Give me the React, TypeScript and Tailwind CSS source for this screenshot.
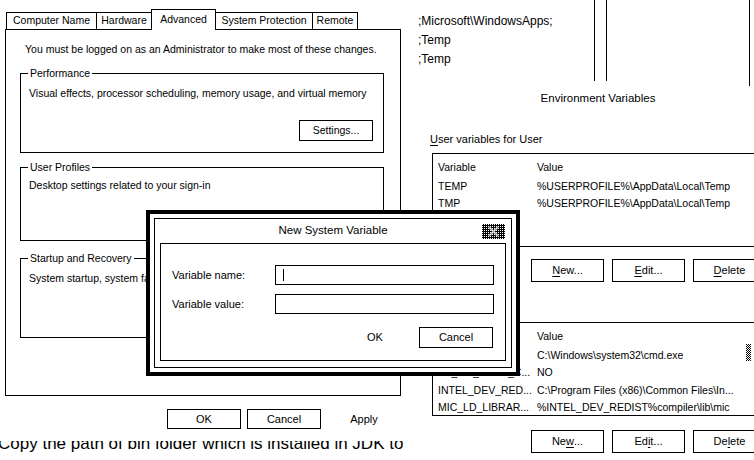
import React from "react";

const tabs = [
  { label: "Computer Name", w: "w-[91px]" },
  { label: "Hardware", w: "w-[56px]" },
  { label: "Advanced", w: "w-[65px]", active: true },
  { label: "System Protection", w: "w-[98px]" },
  { label: "Remote", w: "w-[46px]" },
];

const userVars = [
  ["TEMP", "%USERPROFILE%\\AppData\\Local\\Temp"],
  ["TMP", "%USERPROFILE%\\AppData\\Local\\Temp"],
];

const systemVars = [
  ["ComSpec", "C:\\Windows\\system32\\cmd.exe"],
  ["FP_NO_HOST_C...", "NO"],
  ["INTEL_DEV_RED...", "C:\\Program Files (x86)\\Common Files\\In..."],
  ["MIC_LD_LIBRAR...", "%INTEL_DEV_REDIST%compiler\\lib\\mic"],
];

function Btn({ children, className = "" }: { children: React.ReactNode; className?: string }) {
  return (
    <div className={`flex items-center justify-center border border-black ${className}`}>
      {children}
    </div>
  );
}

function Key({ children }: { children: React.ReactNode }) {
  return <span className="underline underline-offset-2">{children}</span>;
}

function Group({
  title,
  className = "",
  children,
}: {
  title: string;
  className?: string;
  children: React.ReactNode;
}) {
  return (
    <fieldset className={`w-[364px] border border-black pl-[8px] ${className}`}>
      <legend className="-ml-[1px] h-[13px] px-[2px] leading-[13px]">{title}</legend>
      {children}
    </fieldset>
  );
}

function SystemProperties() {
  return (
    <div className="absolute left-0 top-0 w-[401px] pt-[9px] text-[10.5px]">
      {/* tabs */}
      <div className="ml-[6px] flex items-end">
        {tabs.map((t, i) => (
          <div
            key={t.label}
            className={`${t.w} ${i > 0 ? "-ml-px" : ""} flex items-center justify-center border border-b-0 border-black bg-white ${
              t.active ? "relative z-10 -mb-px h-[21px]" : "h-[17px]"
            }`}
          >
            {t.label}
          </div>
        ))}
      </div>

      {/* tab page */}
      <div className="ml-[5px] h-[367px] w-[396px] border border-black pl-[14px] pt-[13px]">
        <p className="ml-[5px] h-[13px] leading-[13px]">
          You must be logged on as an Administrator to make most of these changes.
        </p>

        <Group title="Performance" className="mt-[11px] h-[86px]">
          <p className="mt-[7px] leading-[13px]">
            Visual effects, processor scheduling, memory usage, and virtual memory
          </p>
          <div className="mt-[20px] flex justify-end pr-[10px]">
            <Btn className="h-[21px] w-[74px]">Settings...</Btn>
          </div>
        </Group>

        <Group title="User Profiles" className="mt-[8px] h-[80px]">
          <p className="mt-[5px] leading-[13px]">Desktop settings related to your sign-in</p>
        </Group>

        <Group title="Startup and Recovery" className="mt-[11px] h-[86px]">
          <p className="mt-[7px] leading-[13px]">System startup, system failure, and debugging information</p>
        </Group>
      </div>

      <div className="ml-[5px] mt-[13px] flex w-[396px] justify-end gap-[6px] text-[11px]">
        <Btn className="h-[20px] w-[74px]">OK</Btn>
        <Btn className="h-[20px] w-[74px]">Cancel</Btn>
        <Btn className="h-[20px] w-[74px] border-transparent">Apply</Btn>
      </div>
    </div>
  );
}

function VarList({ rows, scroll = false }: { rows: string[][]; scroll?: boolean }) {
  return (
    <div className="relative ml-[2px] h-[94px] border border-black pl-[5px] pt-[6px] text-[10.5px]">
      <div className="flex h-[14px] leading-[14px]">
        <span className="w-[99px]">Variable</span>
        <span>Value</span>
      </div>
      <div className="mt-[4px]">
        {rows.map(([k, v]) => (
          <div key={k} className="flex h-[17.5px] items-center whitespace-nowrap">
            <span className="w-[99px]">{k}</span>
            <span>{v}</span>
          </div>
        ))}
      </div>
      {scroll && (
        <svg className="absolute left-[313px] top-[21px]" width="5" height="17">
          <defs>
            <pattern id="sb" width="2" height="2" patternUnits="userSpaceOnUse">
              <rect width="1" height="1" fill="#000" />
              <rect x="1" y="1" width="1" height="1" fill="#000" />
            </pattern>
          </defs>
          <rect width="5" height="17" fill="url(#sb)" />
        </svg>
      )}
    </div>
  );
}

function EnvironmentVariables() {
  return (
    <div className="absolute left-[420px] top-[88px] w-[356px] px-[10px]">
      <div className="h-[20px] text-center text-[11.5px] leading-[20px]">Environment Variables</div>

      <div className="mt-[24px] h-[14px] text-[11px] leading-[14px]">
        <Key>U</Key>ser variables for User
      </div>
      <div className="mt-[7px]">
        <VarList rows={userVars} />
      </div>
      <div className="ml-[101px] mt-[12px] flex gap-[8px] text-[11px]">
        <Btn className="h-[23px] w-[73px] shrink-0">
          <Key>N</Key>ew...
        </Btn>
        <Btn className="h-[23px] w-[73px] shrink-0">
          <Key>E</Key>dit...
        </Btn>
        <Btn className="h-[23px] w-[73px] shrink-0">
          <Key>D</Key>elete
        </Btn>
      </div>

      <div className="mt-[20px] h-[14px] text-[11px] leading-[14px]">
        <Key>S</Key>ystem variables
      </div>
      <div className="mt-[6px]">
        <VarList rows={systemVars} scroll />
      </div>
      <div className="ml-[101px] mt-[14px] flex gap-[8px] text-[11px]">
        <Btn className="h-[23px] w-[73px] shrink-0">
          Ne<Key>w</Key>...
        </Btn>
        <Btn className="h-[23px] w-[73px] shrink-0">
          Ed<Key>i</Key>t...
        </Btn>
        <Btn className="h-[23px] w-[73px] shrink-0">
          De<Key>l</Key>ete
        </Btn>
      </div>
    </div>
  );
}

function EditFragment() {
  return (
    <div className="absolute left-[410px] top-0 flex items-start">
      <div className="w-[184px] pl-[8px] pt-[12px] text-[12px] leading-[19px]">
        <p>;Microsoft\WindowsApps;</p>
        <p>;Temp</p>
        <p>;Temp</p>
      </div>
      <div className="h-[81px] w-[13px] border-x border-black" />
      <div className="h-[86px] w-[143px] border-r border-black" />
    </div>
  );
}

function CloseGlyph() {
  return (
    <svg width="23" height="15" viewBox="0 0 23 15">
      <defs>
        <pattern id="dither" width="2" height="2" patternUnits="userSpaceOnUse">
          <rect width="2" height="2" fill="#000" />
          <rect width="1" height="1" fill="#fff" />
        </pattern>
      </defs>
      <rect width="23" height="15" fill="url(#dither)" />
      <path d="M7 3 L16 12 M16 3 L7 12" stroke="#fff" strokeWidth="2" opacity="0.7" />
    </svg>
  );
}

function NewSystemVariable() {
  return (
    <div className="absolute left-[146px] top-[210px] z-20 h-[166px] w-[374px] border-4 border-black bg-white p-[4px]">
      <div className="flex h-full flex-col border border-black">
        <div className="grid h-[24px] grid-cols-[1fr_auto_1fr] items-center">
          <span />
          <span className="text-[11.5px]">New System Variable</span>
          <span className="justify-self-end pr-[6px]">
            <CloseGlyph />
          </span>
        </div>
        <div className="mx-[5px] h-[118px] border border-black px-[11px] pt-[21px] text-[11px]">
          <div className="flex h-[20px] items-center">
            <span className="w-[103px]">Variable name:</span>
            <div className="flex h-[20px] flex-1 items-center border border-black">
              <span className="ml-[7px] h-[12px] w-px bg-black" />
            </div>
          </div>
          <div className="mt-[9px] flex h-[20px] items-center">
            <span className="w-[103px]">Variable value:</span>
            <div className="h-[20px] flex-1 border border-black" />
          </div>
          <div className="mt-[13px] flex justify-end gap-[7px] pr-[1px]">
            <Btn className="h-[21px] w-[74px] border-transparent">OK</Btn>
            <Btn className="h-[21px] w-[74px]">Cancel</Btn>
          </div>
        </div>
      </div>
    </div>
  );
}

function PageText() {
  return (
    <div className="absolute left-[-2px] top-[441px] h-[19px] overflow-hidden">
      <p className="-mt-[7px] whitespace-nowrap text-[17px] leading-[20px]">
        Copy the path of bin folder which is installed in JDK to
      </p>
    </div>
  );
}

export default function App() {
  return (
    <div className="relative h-[460px] w-[754px] overflow-hidden bg-white font-['Liberation_Sans',Arial,sans-serif] text-black">
      <PageText />
      <EditFragment />
      <EnvironmentVariables />
      <SystemProperties />
      <NewSystemVariable />
    </div>
  );
}
